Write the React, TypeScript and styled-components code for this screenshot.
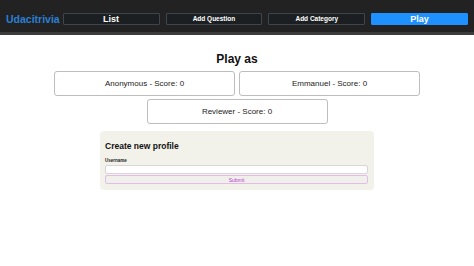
import React from 'react';
import styled, { createGlobalStyle } from 'styled-components';

const GlobalStyle = createGlobalStyle`
    body {
        margin: 0;
        background: #fff;
        font-family: "Liberation Sans", Arial, sans-serif;
    }
`;

const Header = styled.header`
    display: flex;
    align-items: center;
    gap: 3px;
    padding: 5px 6px 0 6px;
    height: 27px;
    background: #222222;
    border-bottom: 3px solid #3c3c3c;
`;

const Logo = styled.div`
    color: #2a7fd4;
    font-weight: 700;
    font-size: 10.5px;
    white-space: nowrap;
`;

const Nav = styled.nav`
    flex: 1;
    display: flex;
    gap: 6px;
`;

const NavButton = styled.div<{ $active?: boolean; $small?: boolean }>`
    flex: 1;
    height: 12px;
    display: flex;
    align-items: center;
    justify-content: center;
    box-sizing: border-box;
    border: 1px solid ${p => (p.$active ? '#1e90ff' : '#3e454c')};
    background: ${p => (p.$active ? '#1e90ff' : '#1c1f22')};
    color: #fff;
    font-weight: 700;
    font-size: ${p => (p.$small ? '6.5px' : '9px')};
    border-radius: 1px;
`;

const Main = styled.main`
    display: flex;
    flex-direction: column;
    align-items: center;
`;

const Title = styled.h2`
    margin: 17px 0 5px 0;
    font-size: 12px;
    font-weight: 700;
    color: #111;
`;

const Players = styled.div`
    display: flex;
    flex-wrap: wrap;
    justify-content: center;
    gap: 3px 4px;
    width: 370px;
`;

const PlayerCard = styled.div`
    width: 181px;
    height: 25px;
    box-sizing: border-box;
    border: 1px solid #bdbdbd;
    border-radius: 3px;
    display: flex;
    align-items: center;
    justify-content: center;
    font-size: 8px;
    color: #222;
`;

const ProfileBox = styled.section`
    margin-top: 7px;
    width: 274px;
    box-sizing: border-box;
    background: #f3f2ea;
    border-radius: 4px;
    padding: 10px 6px 6px 5px;
`;

const ProfileTitle = styled.h3`
    margin: 0 0 7px 0;
    font-size: 8.5px;
    font-weight: 700;
    color: #111;
`;

const Label = styled.label`
    display: block;
    font-size: 4.5px;
    font-weight: 700;
    color: #222;
    margin-bottom: 2px;
`;

const Input = styled.div`
    height: 9px;
    box-sizing: border-box;
    background: #fff;
    border: 1px solid #d9d6d9;
    border-radius: 2px;
`;

const Submit = styled.div`
    margin-top: 1px;
    height: 9px;
    box-sizing: border-box;
    background: #f1efec;
    border: 1px solid #e2bde8;
    border-radius: 2px;
    display: flex;
    align-items: center;
    justify-content: center;
    font-size: 5px;
    color: #b63ccb;
`;

const players = [
    { name: 'Anonymous', score: 0 },
    { name: 'Emmanuel', score: 0 },
    { name: 'Reviewer', score: 0 },
];

function App() {
    return (
        <>
            <GlobalStyle />
            <Header>
                <Logo>Udacitrivia</Logo>
                <Nav>
                    <NavButton>List</NavButton>
                    <NavButton $small>Add Question</NavButton>
                    <NavButton $small>Add Category</NavButton>
                    <NavButton $active>Play</NavButton>
                </Nav>
            </Header>
            <Main>
                <Title>Play as</Title>
                <Players>
                    {players.map(p => (
                        <PlayerCard key={p.name}>{p.name} - Score: {p.score}</PlayerCard>
                    ))}
                </Players>
                <ProfileBox>
                    <ProfileTitle>Create new profile</ProfileTitle>
                    <Label>Username</Label>
                    <Input />
                    <Submit>Submit</Submit>
                </ProfileBox>
            </Main>
        </>
    );
}

export default App;
